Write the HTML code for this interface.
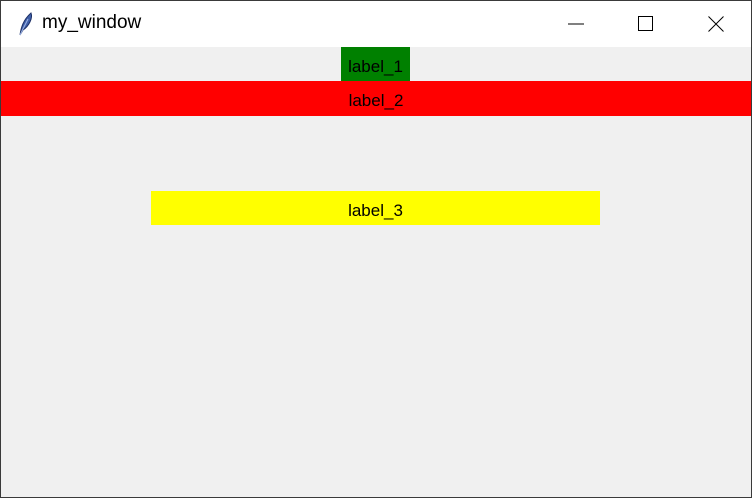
<!DOCTYPE html>
<html><head><style>
body{margin:0;width:752px;height:498px;overflow:hidden;font-family:"Liberation Sans",sans-serif;}
.win{position:absolute;left:0;top:0;width:750px;height:496px;border:1px solid #3a3a3a;background:#f0f0f0;}
.tb{position:absolute;left:0;top:0;width:750px;height:46px;background:#fff;}
.title{position:absolute;left:41px;top:11px;font-size:19px;color:#000;}
.lbl{position:absolute;font-size:17px;color:#000;text-align:center;line-height:39px;overflow:hidden;}
</style></head><body>
<div class="win">
<div class="tb">
<svg style="position:absolute;left:16px;top:11px" width="18" height="24" viewBox="0 0 18 24"><path d="M3 23 C4 16 6 8 14 1 C16 6 12 14 6 18 Z" fill="#3f5fa8" stroke="#1c2f66" stroke-width="1"/><path d="M3 23 L11 7" stroke="#9fb6e6" stroke-width="1"/></svg>
<div class="title">my_window</div>
<svg style="position:absolute;left:567px;top:22px" width="16" height="2"><rect width="16" height="1" y="0.5" fill="#000"/></svg>
<svg style="position:absolute;left:637px;top:15px" width="16" height="16"><rect x="0.5" y="0.5" width="14" height="14" fill="none" stroke="#000"/></svg>
<svg style="position:absolute;left:707px;top:15px" width="16" height="16"><path d="M0.5 0.5 L15.5 15.5 M15.5 0.5 L0.5 15.5" stroke="#000" stroke-width="1"/></svg>
</div>
<div class="lbl" style="left:340px;top:46px;width:69px;height:34px;background:#008000">label_1</div>
<div class="lbl" style="left:0;top:80px;width:750px;height:35px;background:#ff0000">label_2</div>
<div class="lbl" style="left:150px;top:190px;width:449px;height:34px;background:#ffff00">label_3</div>
</div>
</body></html>
